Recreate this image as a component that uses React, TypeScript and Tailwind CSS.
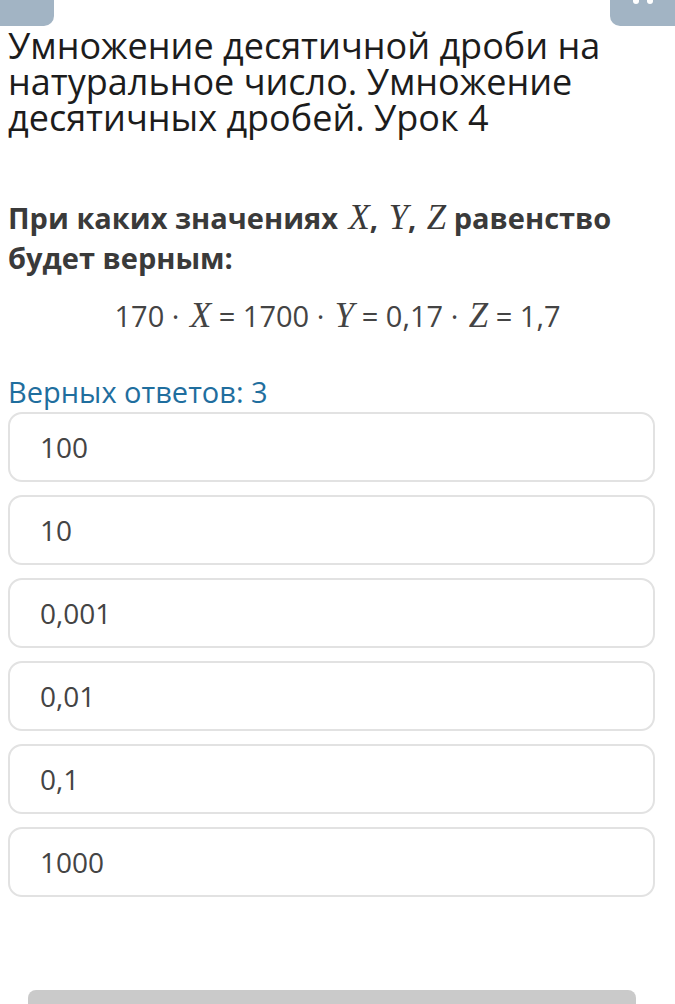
export default function App() {
  const options = ["100", "10", "0,001", "0,01", "0,1", "1000"];

  const mathVar = (v: string) => (
    <span
      className="italic font-normal text-[1.2em] leading-[1] ml-[3px]"
      style={{ fontFamily: "'Liberation Serif', 'DejaVu Serif', serif" }}
    >
      {v}
    </span>
  );

  return (
    <div
      className="relative w-[675px] h-[1004px] overflow-hidden bg-white"
      style={{ fontFamily: "'Open Sans', 'Noto Sans', sans-serif" }}
    >
      {/* top buttons */}
      <div className="flex justify-between">
        <div className="w-[54px] h-[26px] bg-[#a2b4c4] rounded-br-[10px]" />
        <div className="w-[65px] h-[26px] bg-[#a2b4c4] rounded-bl-[10px] flex justify-center gap-[8px]">
          <div className="w-[6px] h-[4px] bg-white rounded-b-full" />
          <div className="w-[6px] h-[4px] bg-white rounded-b-full" />
        </div>
      </div>

      <h1 className="px-[8px] mt-[2px] text-[36px] leading-[36px] text-[#1c1c1c] font-normal">
        Умножение десятичной дроби на натуральное число. Умножение десятичных дробей. Урок 4
      </h1>

      <p className="px-[8px] mt-[62px] text-[29px] leading-[40px] font-bold text-[#3a3a3a]">
        При каких значениях {mathVar("X")}, {mathVar("Y")}, {mathVar("Z")} равенство
        <br />
        будет верным:
      </p>

      <div className="mt-[18px] text-center text-[29px] leading-[40px] text-[#444]">
        170 · {mathVar("X")} = 1700 · {mathVar("Y")} = 0,17 · {mathVar("Z")} = 1,7
      </div>

      <div className="px-[8px] mt-[38px] text-[29px] leading-[36px] text-[#1f6e9e]">
        Верных ответов: 3
      </div>

      <div className="px-[8px] pr-[20px] mt-[2px] flex flex-col gap-[13px]">
        {options.map((o) => (
          <div
            key={o}
            className="h-[70px] border-2 border-[#e2e2e2] rounded-[14px] flex items-center pl-[30px] text-[28px] text-[#444]"
          >
            {o}
          </div>
        ))}
      </div>

      <div className="absolute left-[28px] right-[39px] top-[990px] h-[30px] bg-[#cacaca] rounded-t-[8px]" />
    </div>
  );
}
